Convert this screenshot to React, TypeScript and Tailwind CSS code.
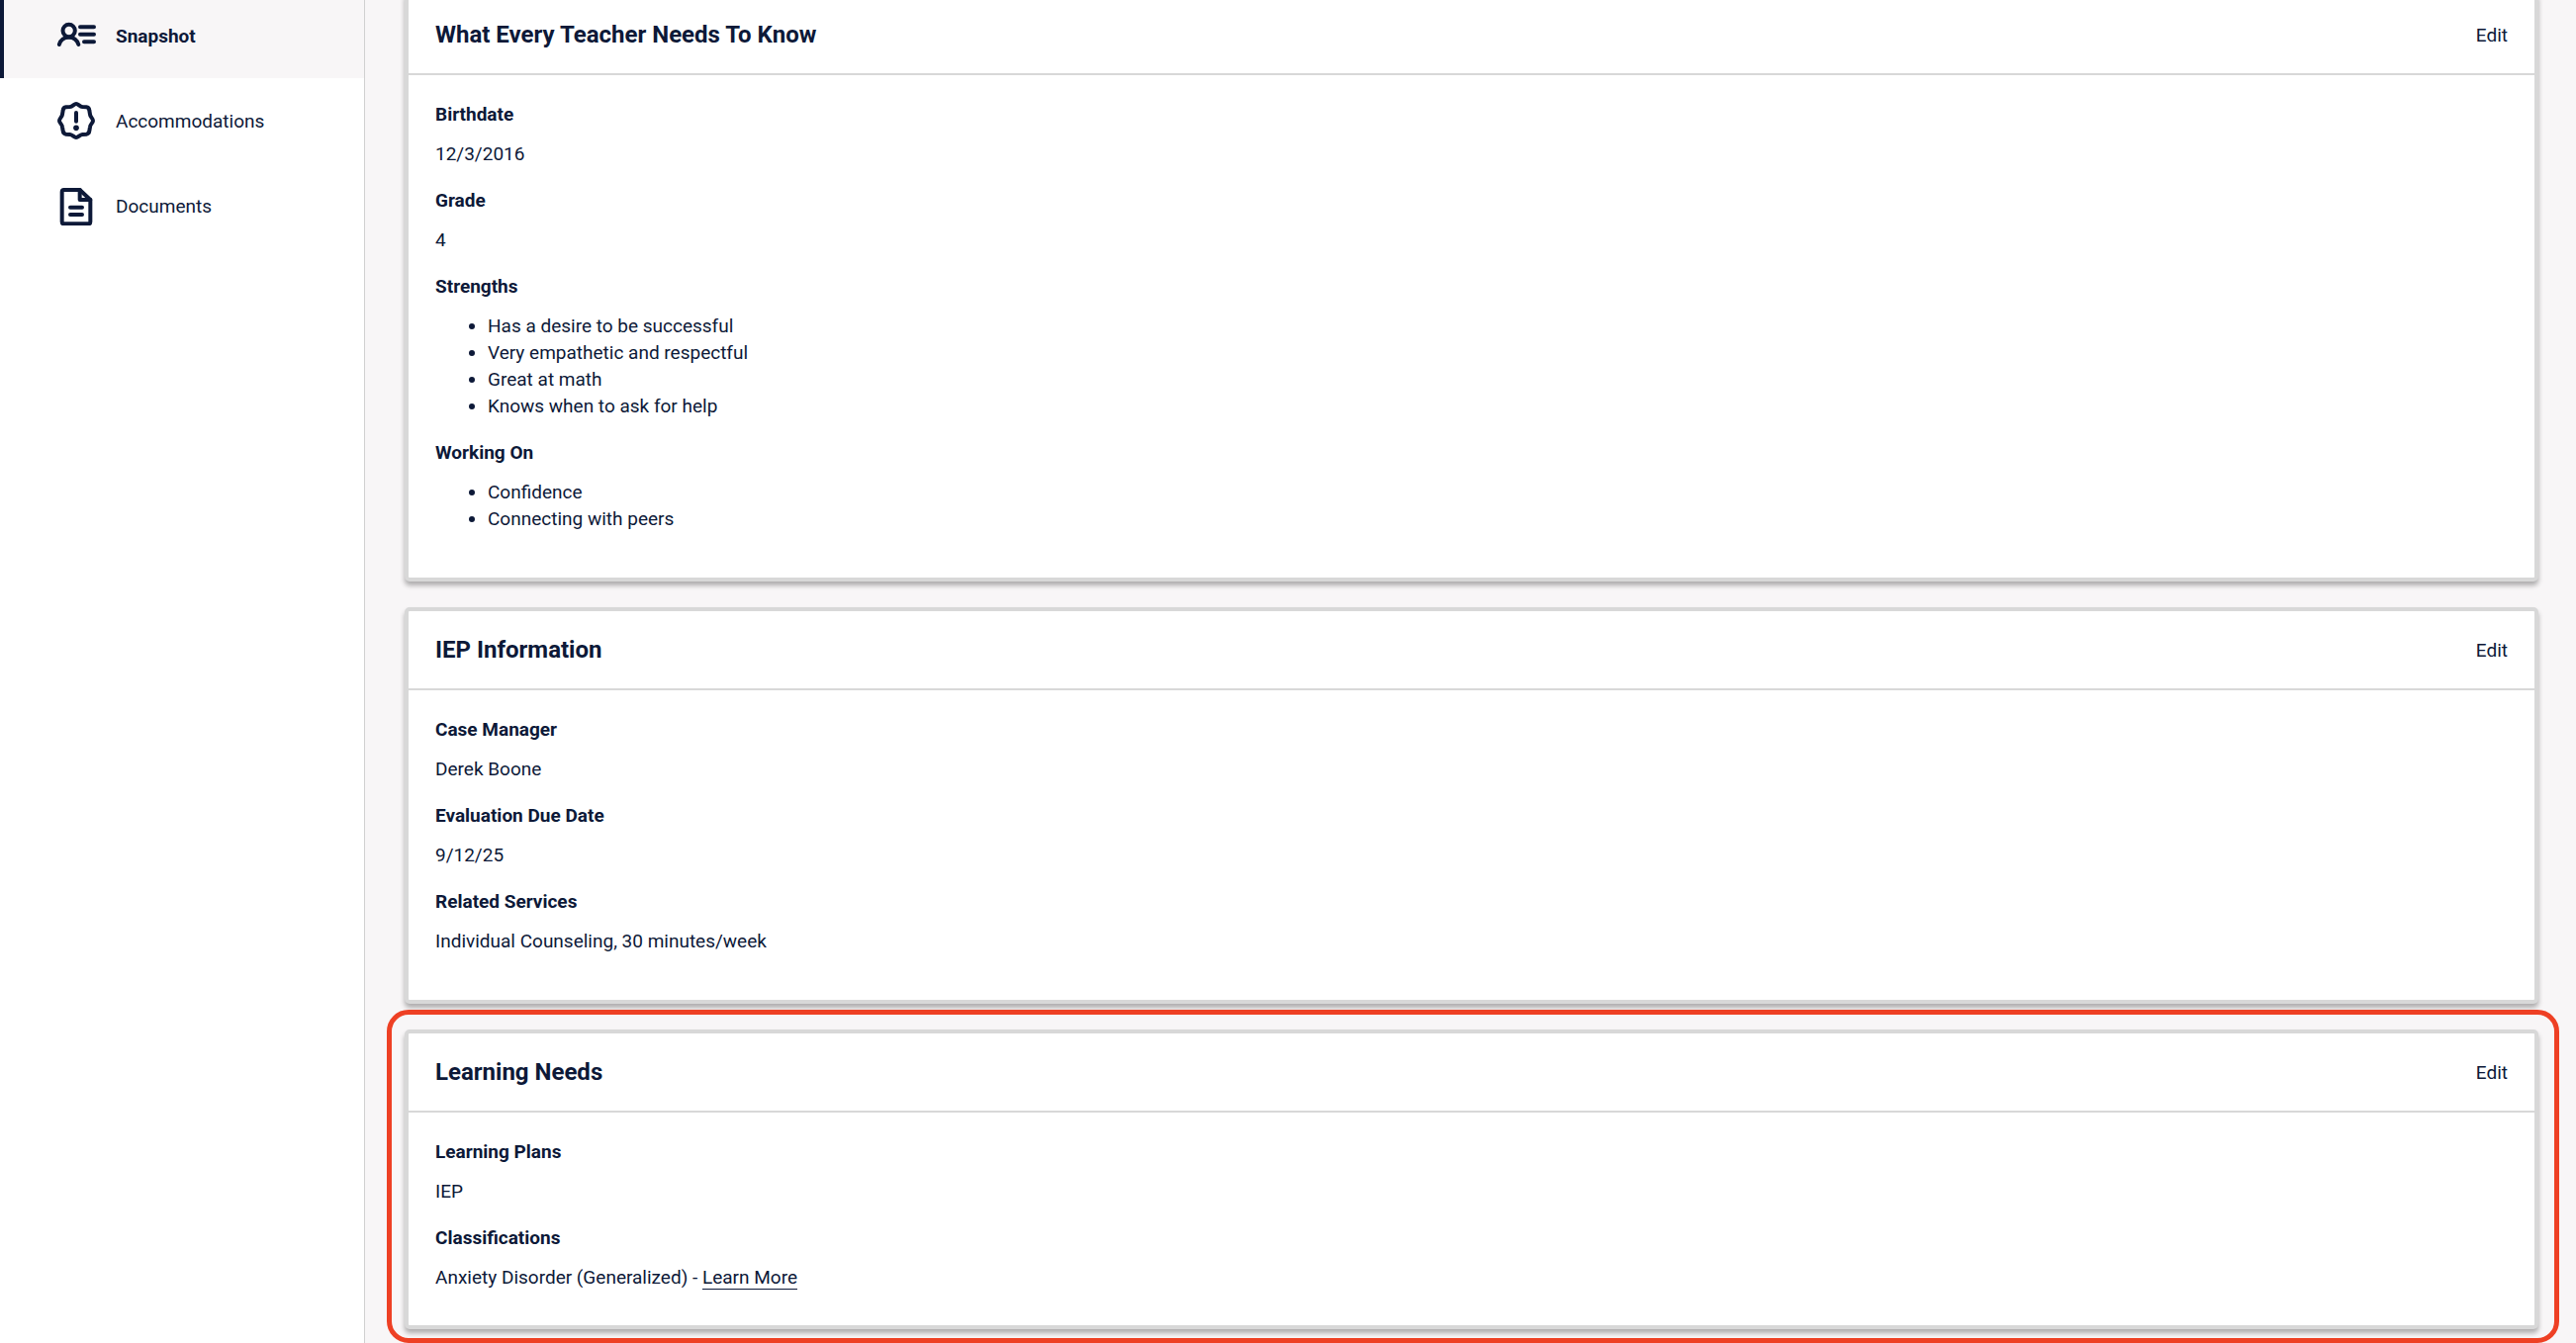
import type { ReactNode } from 'react'
import clsx from 'clsx'

type IconProps = {
  viewBox: string
  children: ReactNode
}

function Icon({ viewBox, children }: IconProps) {
  return (
    <svg
      className="size-10 shrink-0"
      viewBox={viewBox}
      fill="none"
      stroke="currentColor"
      strokeWidth="12"
      strokeLinecap="round"
      strokeLinejoin="round"
      aria-hidden="true"
    >
      {children}
    </svg>
  )
}

const snapshotIcon = (
  <Icon viewBox="0 2 120 120">
    <circle cx="38" cy="47" r="18.5" />
    <path d="M8.500 89C12 76 24 67 38 67s25 9 29 22" />
    <path d="M72 36h42M72 58h42M84 81h30" />
  </Icon>
)

const accommodationsIcon = (
  <Icon viewBox="-60 -60 120 120">
    <path d="M0-51C7-51 10-43 19-42L31-41Q39-40 40-31L42-19C43-10 51-7 51 0S43 10 42 19L40 31Q39 40 31 41L19 42C10 43 7 51 0 51S-10 43-19 42L-31 41Q-39 40-40 31L-42 19C-43 10-51 7-51 0S-43-10-42-19L-40-31Q-39-40-31-41L-19-42C-10-43-7-51 0-51Z" />
    <path d="M0-24V2" />
    <circle cx="0" cy="22" r="8.500" fill="currentColor" stroke="none" />
  </Icon>
)

const documentsIcon = (
  <Icon viewBox="0 0 120 120">
    <path d="M17 18Q17 12 23 12H71L103 42V109Q103 115 97 115H23Q17 115 17 109Z" />
    <path d="M71 12V42H103" />
    <path d="M42 65H78M42 87H78" />
  </Icon>
)

const navItems = [
  { label: 'Snapshot', icon: snapshotIcon, active: true },
  { label: 'Accommodations', icon: accommodationsIcon, active: false },
  { label: 'Documents', icon: documentsIcon, active: false },
]

function Sidebar() {
  return (
    <aside className="w-[369px] shrink-0 border-r border-[#d0d0d0] bg-white">
      <nav className="-mt-[7px]">
        {navItems.map((item) => (
          <a
            key={item.label}
            href="#"
            aria-current={item.active ? 'page' : undefined}
            className={clsx(
              'flex h-[86px] items-center gap-5 border-l-4 pl-[53px]',
              item.active ? 'border-[#0d1938] bg-[#f8f6f7] font-bold' : 'border-transparent',
            )}
          >
            {item.icon}
            {item.label}
          </a>
        ))}
      </nav>
    </aside>
  )
}

type CardProps = {
  title: string
  compact?: boolean
  highlighted?: boolean
  children: ReactNode
}

function Card({ title, compact, highlighted, children }: CardProps) {
  return (
    <div className="relative">
      <section className="rounded-[5px] border-4 border-[#d8d8d8] bg-white shadow-[0_4px_5px_rgba(0,0,0,0.3)]">
        <header className="flex h-20 items-center justify-between border-b-2 border-[#d8d8d8] px-[27px]">
          <h2 className="text-[24px] font-bold">{title}</h2>
          <button type="button">Edit</button>
        </header>
        <dl className={clsx('flex flex-col gap-5 px-[27px] pt-[26px]', compact ? 'pb-[35px]' : 'pb-[46px]')}>
          {children}
        </dl>
      </section>
      {highlighted && (
        <div className="pointer-events-none absolute -top-5 -right-[21px] -bottom-[14px] -left-[18px] rounded-[22px] border-5 border-[#ee4024]" />
      )}
    </div>
  )
}

function Field({ label, children }: { label: string; children: ReactNode }) {
  return (
    <div className="flex flex-col gap-[13px]">
      <dt className="font-bold">{label}</dt>
      <dd>{children}</dd>
    </div>
  )
}

function BulletList({ items }: { items: string[] }) {
  return (
    <ul className="list-disc pl-[53px]">
      {items.map((item) => (
        <li key={item}>{item}</li>
      ))}
    </ul>
  )
}

export default function App() {
  return (
    <div className="flex min-h-screen bg-[#f8f6f7] font-[Roboto,sans-serif] text-[19px] leading-[27px] text-[#0d1938]">
      <Sidebar />
      <main className="-mt-2 flex flex-1 flex-col gap-[26px] pr-[38px] pl-10">
        <Card title="What Every Teacher Needs To Know">
          <Field label="Birthdate">12/3/2016</Field>
          <Field label="Grade">4</Field>
          <Field label="Strengths">
            <BulletList
              items={[
                'Has a desire to be successful',
                'Very empathetic and respectful',
                'Great at math',
                'Knows when to ask for help',
              ]}
            />
          </Field>
          <Field label="Working On">
            <BulletList items={['Confidence', 'Connecting with peers']} />
          </Field>
        </Card>
        <Card title="IEP Information">
          <Field label="Case Manager">Derek Boone</Field>
          <Field label="Evaluation Due Date">9/12/25</Field>
          <Field label="Related Services">Individual Counseling, 30 minutes/week</Field>
        </Card>
        <Card title="Learning Needs" compact highlighted>
          <Field label="Learning Plans">IEP</Field>
          <Field label="Classifications">
            Anxiety Disorder (Generalized) -{' '}
            <a href="#" className="border-b border-[#0d1938]">
              Learn More
            </a>
          </Field>
        </Card>
      </main>
    </div>
  )
}
